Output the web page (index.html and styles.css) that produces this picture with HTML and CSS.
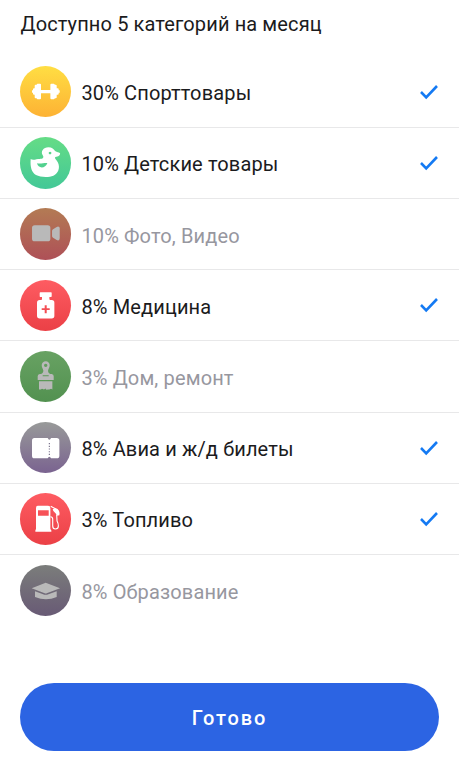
FILE: index.html
```html
<!DOCTYPE html>
<html lang="ru">
<head>
<meta charset="utf-8">
<title>Категории</title>
<link rel="stylesheet" href="styles.css">
</head>
<body>
<main class="screen">
  <h1 class="title">Доступно 5 категорий на месяц</h1>
  <ul class="list">
    <li class="row">
      <svg class="icon sport" viewBox="30 30 154 154"><path d="M66 103h3v-3q0-3 3-3h2v-8q0-3 3-3h3q0-3 3-3h7q3 0 3 3v16h28V86q0-3 3-3h7q3 0 3 3h3q3 0 3 3v8h3q3 0 3 3v3h3v7h-3v3q0 3-3 3h-3v8q0 3-3 3h-3q0 3-3 3h-7q-3 0-3-3v-15H93v15q0 3-3 3h-7q-3 0-3-3h-3q-3 0-3-3v-8h-2q-3 0-3-3v-3h-3z"/></svg>
      <span class="label">30% Спорттовары</span>
      <svg class="check" viewBox="0 0 20 16"><path d="M2 8l5.2 5.3L18 2"/></svg>
    </li>
    <li class="row">
      <svg class="icon kids" viewBox="30 28 154 154"><path fill-rule="evenodd" d="M62 94C68 99 80 94 89 94C98 94 103 90 98 83C91 72 100 59 115 59C126 59 132 65 135 70C141 74 146 73 150 77C151 82 145 88 136 88C132 92 140 97 144 105C151 121 144 137 130 144C116 150 91 149 78 142C65 134 60 119 62 94ZM120 72a4 4 0 1 0 .1 0ZM81 107C84 123 106 124 112 106C102 105 94 109 81 107Z"/></svg>
      <span class="label">10% Детские товары</span>
      <svg class="check" viewBox="0 0 20 16"><path d="M2 8l5.2 5.3L18 2"/></svg>
    </li>
    <li class="row off">
      <svg class="icon video" viewBox="30 32 154 154"><rect x="66" y="84" width="55" height="48" rx="8"/><path d="M126 101q0-3 3-5l11-7q3-2 6-1 3 1 3 5v30q0 5-3 6-3 1-6-1l-11-7q-3-2-3-5z"/></svg>
      <span class="label">10% Фото, Видео</span>
    </li>
    <li class="row">
      <svg class="icon medicine" viewBox="30 29 154 154"><path fill-rule="evenodd" d="M91 66h32q2 0 2 2v10q0 2-2 2h-5v6q0 3 3 3h4q8 0 8 8v39q0 8-8 8H89q-8 0-8-8V97q0-8 8-8h4q3 0 3-3v-6h-5q-2 0-2-2V68q0-2 2-2ZM104 105v9h-9v5h9v10h6v-10h9v-5h-9v-9Z"/></svg>
      <span class="label">8% Медицина</span>
      <svg class="check" viewBox="0 0 20 16"><path d="M2 8l5.2 5.3L18 2"/></svg>
    </li>
    <li class="row off">
      <svg class="icon home" viewBox="30 32 154 154"><path fill-rule="evenodd" d="M107 63C114 63 119 69 119 75C119 81 115 85 114 91C114 98 119 101 125 101Q131 102 131 108V119H83V108Q83 102 89 101C95 101 100 98 100 91C99 85 95 81 95 75C95 69 100 63 107 63ZM107 70a5 5 0 1 0 .1 0ZM98 105h18v3H98Z"/><path d="M87 123h40v24l-4-2-5 2h-4l-5 1-3-4-4 3-6-2-4 2h-5z"/></svg>
      <span class="label">3% Дом, ремонт</span>
    </li>
    <li class="row">
      <svg class="icon tickets" viewBox="30 29 154 154"><path d="M73 77h40q2 5 5 5t5-5h17q8 0 8 8v45q0 8-8 8h-17q-2-5-5-5t-5 5H73q-7 0-7-8V85q0-8 7-8Z"/><path class="perforation" d="M118 92v36"/></svg>
      <span class="label">8% Авиа и ж/д билеты</span>
      <svg class="check" viewBox="0 0 20 16"><path d="M2 8l5.2 5.3L18 2"/></svg>
    </li>
    <li class="row">
      <svg class="icon fuel" viewBox="30 27 154 154"><path fill-rule="evenodd" d="M83 65h31q7 0 7 7v64q3 1 3 4v3H76v-3q0-3 2-4V72q0-7 5-7ZM84 79v16h32V79Z"/><path class="hose" d="M121 98q7 0 7 8v20q0 9 8 9 9 0 9-9 0-8-4-15l-1-18M122 67l14 7 8 7"/><path d="M128 76l8-3q8 1 11 8 3 7 1 13l-8 1q-2-7-5-9-6-3-7-10Z"/></svg>
      <span class="label">3% Топливо</span>
      <svg class="check" viewBox="0 0 20 16"><path d="M2 8l5.2 5.3L18 2"/></svg>
    </li>
    <li class="row off">
      <svg class="icon education" viewBox="30 27 154 154"><path d="M65 97l40-16q2-1 4 0l41 16-40 15q-3 1-6 0ZM75 106l28 10q4 1 8 0l29-10v17q-32 13-65 0Z"/></svg>
      <span class="label">8% Образование</span>
    </li>
  </ul>
  <button class="done" type="button">Готово</button>
</main>
</body>
</html>
```
FILE: styles.css
```css
* {
  box-sizing: border-box;
}

body {
  margin: 0;
  background: #fff;
  color: #1b1b1d;
  font-family: Roboto, sans-serif;
  font-size: 20px;
}

.screen {
  display: flex;
  flex-direction: column;
  height: 765px;
  overflow: hidden;
}

.title {
  margin: 0;
  height: 56.6px;
  padding: 11.5px 20px 0 20.5px;
  font-size: 20px;
  font-weight: 400;
  line-height: 24px;
  letter-spacing: 0.12px;
}

.list {
  margin: 0;
  padding: 0;
  list-style: none;
}

.row {
  display: flex;
  align-items: center;
  height: 71.2px;
  padding: 0 20px;
  border-bottom: 1px solid #e8e8e9;
}

.row:last-child {
  border-bottom: 0;
}

.icon {
  width: 51.4px;
  height: 51.4px;
  border-radius: 50%;
  flex: none;
  fill: #fff;
}

.label {
  flex: 1;
  margin-left: 10px;
  padding-top: 3px;
  line-height: 24px;
  letter-spacing: 0.14px;
  white-space: nowrap;
}

.off .label {
  color: #97979f;
}

.off .icon {
  fill: #b9b9b9;
}

.check {
  width: 20px;
  height: 16px;
  fill: none;
  stroke: #147af3;
  stroke-width: 2.6;
}

.sport {
  background: linear-gradient(#ffde43, #fdb234);
}

.kids {
  background: linear-gradient(#65dc86, #43c897);
}

.video {
  background: linear-gradient(#b37b54, #ae5057);
}

.medicine,
.fuel {
  background: linear-gradient(#fe5c62, #eb4046);
}

.home {
  background: linear-gradient(#68a263, #529150);
}

.tickets {
  background: linear-gradient(#989a99, #7a6390);
}

.education {
  background: linear-gradient(#7b7d7b, #685a75);
}

.perforation {
  fill: none;
  stroke: #77708a;
  stroke-width: 3.5;
  stroke-dasharray: 3.5 4.6;
}

.hose {
  fill: none;
  stroke: #fff;
  stroke-width: 3.4;
}

.done {
  height: 68px;
  margin: 57px 20px 0;
  border: 0;
  border-radius: 34px;
  background: #2c64e3;
  color: #fff;
  font: 500 20px/68px Roboto, sans-serif;
  letter-spacing: 1.9px;
}
```
